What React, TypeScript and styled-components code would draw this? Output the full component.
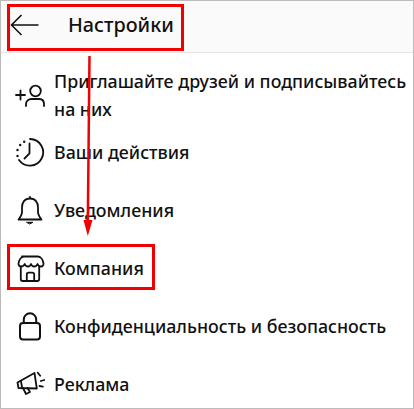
import React from "react"
import styled, { createGlobalStyle } from "styled-components"

const GlobalStyle = createGlobalStyle`
	html, body {
		margin: 0;
		padding: 0;
		background: #fff;
	}
`

const items = [
	{
		label: "Приглашайте друзей и подписывайтесь на них",
		height: 56,
		icon: (
			<svg width="30" height="30" viewBox="0 0 30 30" fill="none" stroke="#111" strokeWidth="1.8" strokeLinecap="round">
				<path d="M1 14h9M5.500 9.500v9" />
				<circle cx="20.500" cy="10" r="5.300" />
				<path d="M11 25v-1.500c0-3.500 2.500-5.500 5.500-5.500h8c2.800 0 4.500 2.200 4.500 5.500V25" />
			</svg>
		),
	},
	{
		label: "Ваши действия",
		height: 58,
		icon: (
			<svg width="30" height="30" viewBox="0 0 30 30" fill="none" stroke="#111" strokeWidth="1.8" strokeLinecap="round">
				<path d="M15 1a13.300 13.300 0 1 1-11 21" />
				<path d="M14.500 5.500v10l-5 5" />
				<path d="M9.200 3.700h.01M5.200 7h.01M2.500 12h.01M2.500 18h.01" strokeWidth="2.400" />
			</svg>
		),
	},
	{
		label: "Уведомления",
		height: 58,
		icon: (
			<svg width="30" height="30" viewBox="0 0 30 30" fill="none" stroke="#111" strokeWidth="1.8" strokeLinecap="round" strokeLinejoin="round">
				<path d="M15 2.500c-5.500 0-8 4-8 9v4.500c0 3-2 5.500-3.500 7.500h23c-1.500-2-3.500-4.500-3.500-7.500v-4.500c0-5-2.500-9-8-9Z" />
				<path d="M15 1v1" />
				<path d="M12 26.300h6l-3 1.500Z" fill="#111" strokeWidth="1" />
			</svg>
		),
	},
	{
		label: "Компания",
		height: 58,
		icon: (
			<svg width="30" height="30" viewBox="0 0 30 30" fill="none" stroke="#111" strokeWidth="1.8" strokeLinecap="round" strokeLinejoin="round">
				<path d="M7 2.500h16c3 0 5 3.500 5.500 7 .2 1.500-1 3-2.500 3-2 0-3-1-3.500-2.500-.5 1.500-2 2.500-3.300 2.500s-2.700-1-3.200-2.500c-.5 1.500-1.800 2.500-3 2.500s-2.800-1-3.300-2.500c-.5 1.500-1.700 2.500-3.700 2.500-1.500 0-2.700-1.500-2.500-3 .5-3.500 2.500-7 5.500-7Z" />
				<path d="M5.800 12.500V25a2 2 0 0 0 2 2h14.400a2 2 0 0 0 2-2V12.500" />
				<path d="M11.800 27v-6.500a1.800 1.800 0 0 1 1.800-1.800h3.800a1.800 1.800 0 0 1 1.800 1.800V27" />
			</svg>
		),
	},
	{
		label: "Конфиденциальность и безопасность",
		height: 58,
		icon: (
			<svg width="30" height="30" viewBox="0 0 30 30" fill="none" stroke="#111" strokeWidth="2" strokeLinecap="round" strokeLinejoin="round">
				<rect x="5" y="11" width="20" height="16.500" rx="3" />
				<path d="M8.800 11V7.500a6.200 6.200 0 0 1 12.400 0V11" />
			</svg>
		),
	},
	{
		label: "Реклама",
		height: 58,
		icon: (
			<svg width="30" height="30" viewBox="0 0 30 30" fill="none" stroke="#111" strokeWidth="1.8" strokeLinecap="round" strokeLinejoin="round">
				<path d="M2.500 12.500 19.500 3l2.300 15.500L3.500 18Z" />
				<path d="M6 11.500l1.200 6.500" />
				<path d="M8 18l3 6 4-2-2.500-4" />
				<path d="M22.800 2.700l2.400 3M25.800 11l3.700-1M24.500 16l3.300.7" />
			</svg>
		),
	},
]

export default function App() {
	return (
		<>
			<GlobalStyle />
			<Frame>
				<Header>
					<BackArrow width="30" height="24" viewBox="0 0 30 24" fill="none" stroke="#111" strokeWidth="1.6">
						<path d="M28.500 12H1.500M11.500 2 1.500 12l10 10" />
					</BackArrow>
					<Title>Настройки</Title>
				</Header>
				<Menu>
					{items.map((item) => (
						<Row key={item.label} $height={item.height}>
							<IconSlot>{item.icon}</IconSlot>
							<Label>{item.label}</Label>
						</Row>
					))}
				</Menu>
				<HeaderMark />
				<CompanyMark />
				<Arrow width="20" height="186" viewBox="0 0 20 186">
					<path d="M10.500 0 8.800 168" stroke="#f00000" strokeWidth="2.500" fill="none" />
					<path d="M4.500 164h9L8.800 180Z" fill="#f00000" />
				</Arrow>
			</Frame>
		</>
	)
}

// 〓〓〓〓〓〓〓〓〓〓〓〓〓〓〓〓〓〓〓〓〓〓〓〓〓〓〓〓〓〓	STYLED_COMPONENTS

const Frame = styled.div`
	position: relative;
	box-sizing: border-box;
	width: 414px;
	height: 409px;
	overflow: hidden;
	background: #fff;
	border: 1px solid #bcbcbc;
	font-family: "Noto Sans", "Open Sans", sans-serif;
	color: #111;
`

const Header = styled.header`
	display: flex;
	align-items: center;
	box-sizing: border-box;
	height: 52px;
	padding: 0 0 4px 9px;
	background: #fafafa;
	border-bottom: 1px solid #e6e6e6;
`

const BackArrow = styled.svg`
	flex: none;
`

const Title = styled.h1`
	margin: 0 0 0 28px;
	font-size: 19.800px;
	font-weight: 500;
`

const Menu = styled.div`
	display: flex;
	flex-direction: column;
	padding-top: 15px;
`

const Row = styled.div<{ $height: number }>`
	display: flex;
	align-items: center;
	height: ${(p) => p.$height}px;
`

const IconSlot = styled.div`
	display: flex;
	flex: none;
	justify-content: center;
	box-sizing: border-box;
	width: 53px;
	padding-left: 4px;
`

const Label = styled.div`
	margin-bottom: 2px;
	font-size: 17.800px;
	font-weight: 500;
	line-height: 28px;
`

const HeaderMark = styled.div`
	position: absolute;
	left: 6px;
	top: 3px;
	width: 177px;
	height: 47px;
	box-sizing: border-box;
	border: 3px solid #f00000;
`

const CompanyMark = styled.div`
	position: absolute;
	left: 6px;
	top: 243px;
	width: 148px;
	height: 46px;
	box-sizing: border-box;
	border: 3px solid #f00000;
`

const Arrow = styled.svg`
	position: absolute;
	left: 78px;
	top: 55px;
`
